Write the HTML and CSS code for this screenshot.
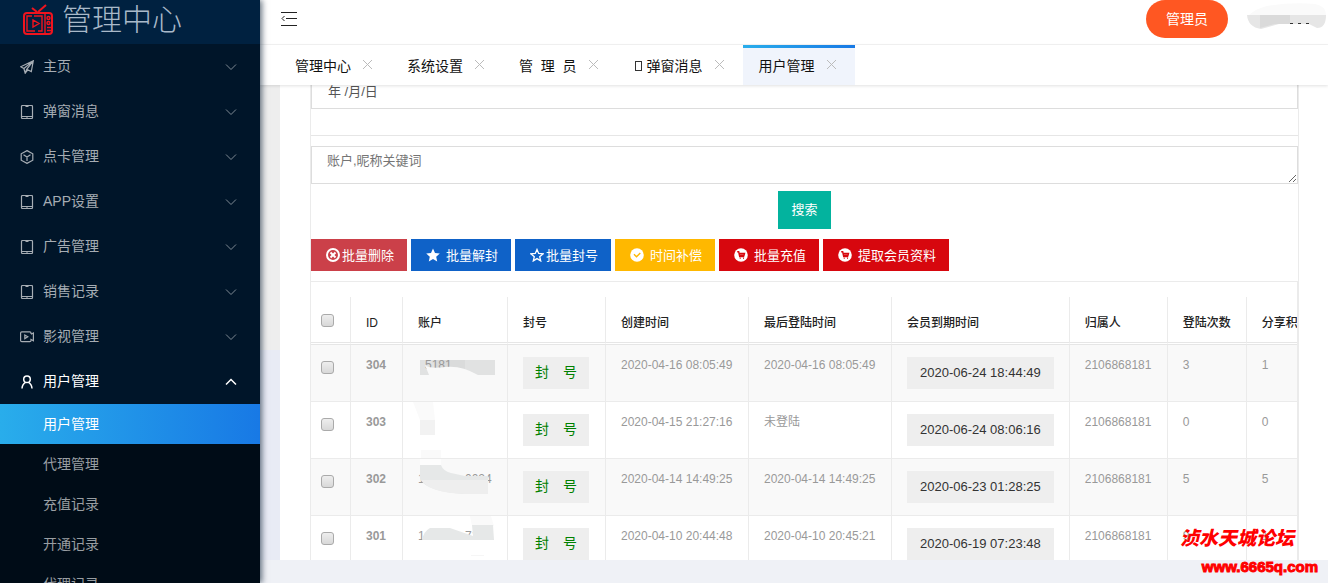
FILE: index.html
```html
<!DOCTYPE html>
<html lang="zh-CN">

<head>
    <meta charset="UTF-8">
    <meta name="viewport" content="width=device-width, initial-scale=1.0">
    <title>管理中心</title>
    <link rel="stylesheet" href="styles.css">
</head>

<body>
    <!-- shared icons -->
    <svg class="sprite" aria-hidden="true">
        <symbol id="i-down" viewBox="0 0 12 12"><path d="M1 3.5l5 5 5-5" /></symbol>
        <symbol id="i-up" viewBox="0 0 12 12"><path d="M1 8.5l5-5 5 5" /></symbol>
        <symbol id="i-close" viewBox="0 0 11 11"><path d="M1 1l9 9M10 1l-9 9" /></symbol>
        <symbol id="i-plane" viewBox="0 0 14 14"><path d="M13.3.8L.7 6.800l3.200 1.700L13.300.8l-2 10.700-4.600-2.200M3.900 8.500l1.300 4.700 1.500-3.900L13.300.8M5.200 13.200l2.600-3.300" /></symbol>
        <symbol id="i-phone" viewBox="0 0 14 14"><rect x="1.500" y=".5" width="11" height="13" rx="1" /><path d="M1.500 11.500h11M5.500 1.500h3M6.500 12.500h1" /></symbol>
        <symbol id="i-cube" viewBox="0 0 14 14"><path d="M7 .6l5.800 3.200v6.400L7 13.400l-5.800-3.200V3.800zM3.500 4.800L7 7l3.500-2.200M7 7v4" /></symbol>
        <symbol id="i-video" viewBox="0 0 14 14"><path d="M11 4V3q0-1.200-1.200-1.200h-8Q.6 1.800.6 3v7.500q0 1.200 1.200 1.200h8Q11 11.700 11 10.500V9.500l2.400 1.200V3L11 4.200M4.800 5v3.600l3-1.800z" /></symbol>
        <symbol id="i-user" viewBox="0 0 14 14"><circle cx="7" cy="4.300" r="3.300" /><path d="M5.500 7.300C3.300 8.500 2.200 10.500 2 13.500M8.500 7.300c2.200 1.200 3.300 3.200 3.500 6.200" /></symbol>
        <symbol id="i-cart" viewBox="0 0 14 14"><circle class="solid" cx="7" cy="7" r="6.800" /><path class="cut" d="M3.200 3.800h1.500l1 4.700h4.600M5 5.500h5.500l-.5 1.800H5.500" /><path class="cut" d="M5.800 10.300h.8M9 10.300h.8" /></symbol>
    </svg>

    <aside class="sidebar">
        <div class="logo">
            <svg class="logo-icon" viewBox="0 0 32 32">
                <rect x="2" y="9" width="28" height="21" rx="3" />
                <path d="M15 8l-5-4M16 8l8-7" />
                <path class="line" d="M23 9v21M12 12h8v15h-4M13 27H5V12h5M11 16v7l6-3.500z" />
                <circle class="line" cx="26.500" cy="14" r="1.500" />
                <circle class="line" cx="26.500" cy="19" r="1.500" />
                <path class="line" d="M25 23.500h4M25 26.500h4" />
            </svg>
            <span>管理中心</span>
        </div>
        <nav class="menu">
            <a href="#"><svg><use href="#i-plane" /></svg><span>主页</span><svg class="arrow"><use href="#i-down" /></svg></a>
            <a href="#"><svg><use href="#i-phone" /></svg><span>弹窗消息</span><svg class="arrow"><use href="#i-down" /></svg></a>
            <a href="#"><svg><use href="#i-cube" /></svg><span>点卡管理</span><svg class="arrow"><use href="#i-down" /></svg></a>
            <a href="#"><svg><use href="#i-phone" /></svg><span>APP设置</span><svg class="arrow"><use href="#i-down" /></svg></a>
            <a href="#"><svg><use href="#i-phone" /></svg><span>广告管理</span><svg class="arrow"><use href="#i-down" /></svg></a>
            <a href="#"><svg><use href="#i-phone" /></svg><span>销售记录</span><svg class="arrow"><use href="#i-down" /></svg></a>
            <a href="#"><svg><use href="#i-video" /></svg><span>影视管理</span><svg class="arrow"><use href="#i-down" /></svg></a>
            <a href="#" class="open"><svg><use href="#i-user" /></svg><span>用户管理</span><svg class="arrow"><use href="#i-up" /></svg></a>
            <div class="submenu">
                <a href="#" class="current">用户管理</a>
                <a href="#">代理管理</a>
                <a href="#">充值记录</a>
                <a href="#">开通记录</a>
                <a href="#">代理记录</a>
            </div>
        </nav>
    </aside>

    <main class="main">
        <header class="topbar">
            <button type="button" class="fold" aria-label="收起菜单">
                <svg viewBox="0 0 16 14"><path d="M0 .5h16M5 6.500h11M0 13.500h16M3.500 4L1 6.500 3.500 9" /></svg>
            </button>
            <div class="account">
                <button type="button" class="role">管理员</button>
                <svg class="name-mask" viewBox="0 0 80 26">
                    <path fill="#fafafa" d="M2 12Q8 6 20 3Q45-1 68 1Q80 3 79 14H2z" />
                    <path fill="#e6e6e6" d="M0 12h79q0 13-9 13l-8-4H32L14 26Q1 24 0 12z" />
                    <path fill="#dadada" d="M13 12h30v9H28l-15 4z" />
                    <path stroke="#333" stroke-dasharray="3 5" d="M43 20.500h19" />
                </svg>
            </div>
        </header>

        <nav class="tabs">
            <a href="#">管理中心<svg><use href="#i-close" /></svg></a>
            <a href="#">系统设置<svg><use href="#i-close" /></svg></a>
            <a href="#">管&nbsp; 理&nbsp; 员<svg><use href="#i-close" /></svg></a>
            <a href="#"><span><i class="missing"></i>弹窗消息</span><svg><use href="#i-close" /></svg></a>
            <a href="#" class="current">用户管理<svg><use href="#i-close" /></svg></a>
        </nav>

        <section class="content">
            <div class="panel">
                <form class="search">
                    <div class="date-row">
                        <input type="text" placeholder="年 /月/日" aria-label="日期">
                    </div>
                    <textarea placeholder="账户,昵称关键词" aria-label="关键词"></textarea>
                    <button type="submit">搜索</button>
                </form>

                <div class="actions">
                    <button type="button" class="btn-delete"><svg viewBox="0 0 14 14"><circle cx="7" cy="7" r="6" /><path d="M4.500 4.500l5 5M9.500 4.500l-5 5" /></svg>批量删除</button>
                    <button type="button" class="btn-blue spaced"><svg viewBox="0 0 14 14"><path class="solid" d="M7 .5l2 4.500 4.800.5-3.600 3.200 1 4.800L7 11l-4.200 2.500 1-4.800L.2 5.500 5 5z" /></svg>批量解封</button>
                    <button type="button" class="btn-blue"><svg viewBox="0 0 14 14"><path class="thin" d="M7 1.500l1.700 4 4.300.4-3.300 2.800 1 4.200L7 10.600l-3.700 2.300 1-4.200L1 5.900l4.300-.4z" /></svg>批量封号</button>
                    <button type="button" class="btn-yellow spaced"><svg viewBox="0 0 14 14"><circle class="solid" cx="7" cy="7" r="6.800" /><path class="cut" d="M4 6.300l2.500 2.500L10.300 5" /></svg>时间补偿</button>
                    <button type="button" class="btn-red spaced"><svg><use href="#i-cart" /></svg>批量充值</button>
                    <button type="button" class="btn-red spaced"><svg><use href="#i-cart" /></svg>提取会员资料</button>
                </div>

                <div class="table-wrap">
                    <table>
                        <thead>
                            <tr>
                                <th class="check"><input type="checkbox" aria-label="全选"></th>
                                <th class="id">ID</th>
                                <th>账户</th>
                                <th class="short">封号</th>
                                <th class="time">创建时间</th>
                                <th class="time">最后登陆时间</th>
                                <th>会员到期时间</th>
                                <th class="short">归属人</th>
                                <th>登陆次数</th>
                                <th>分享积分</th>
                            </tr>
                        </thead>
                        <tbody>
                            <tr>
                                <td class="check"><input type="checkbox" aria-label="304"></td>
                                <td class="id">304</td>
                                <td class="user">
                                    <svg viewBox="0 0 104 56">
                                        <path fill="#e1e2e2" d="M17 15h75v15H17z" />
                                        <path fill="#dadbdb" d="M32 15h30v15H32z" />
                                        <text x="22" y="24">5181</text>
                                        <path fill="#f9f9f9" d="M22 20q4 4 20 2t33 8H26z" />
                                    </svg>
                                </td>
                                <td><button type="button" class="ban">封&emsp;号</button></td>
                                <td>2020-04-16 08:05:49</td>
                                <td>2020-04-16 08:05:49</td>
                                <td><button type="button" class="expire">2020-06-24 18:44:49</button></td>
                                <td>2106868181</td>
                                <td>3</td>
                                <td>1</td>
                            </tr>
                            <tr>
                                <td class="check"><input type="checkbox" aria-label="303"></td>
                                <td class="id">303</td>
                                <td class="user">
                                    <svg viewBox="0 0 104 56">
                                        <path fill="#fafafa" d="M10 0h20l2 18H17z" />
                                        <path fill="#f2f2f2" d="M17 18h15v15H17z" />
                                        <path fill="#fafafa" d="M18 48h20v8H18z" />
                                    </svg>
                                </td>
                                <td><button type="button" class="ban">封&emsp;号</button></td>
                                <td>2020-04-15 21:27:16</td>
                                <td>未登陆</td>
                                <td><button type="button" class="expire">2020-06-24 08:06:16</button></td>
                                <td>2106868181</td>
                                <td>0</td>
                                <td>0</td>
                            </tr>
                            <tr>
                                <td class="check"><input type="checkbox" aria-label="302"></td>
                                <td class="id">302</td>
                                <td class="user">
                                    <svg viewBox="0 0 104 56">
                                        <text x="15" y="24">1</text>
                                        <text x="62" y="24">0024</text>
                                        <path fill="#fdfdfd" d="M17 0h21v6H17z" />
                                        <path fill="#e6e8e8" d="M17 6h21q2 6 10 8l14 3H85v18H62Q24 33 17 20z" />
                                        <path fill="#eee" d="M18 21h67v14H62Q27 34 18 21z" />
                                    </svg>
                                </td>
                                <td><button type="button" class="ban">封&emsp;号</button></td>
                                <td>2020-04-14 14:49:25</td>
                                <td>2020-04-14 14:49:25</td>
                                <td><button type="button" class="expire">2020-06-23 01:28:25</button></td>
                                <td>2106868181</td>
                                <td>5</td>
                                <td>5</td>
                            </tr>
                            <tr>
                                <td class="check"><input type="checkbox" aria-label="301"></td>
                                <td class="id">301</td>
                                <td class="user">
                                    <svg viewBox="0 0 104 56">
                                        <text x="15" y="24">1</text>
                                        <text x="62" y="24">71</text>
                                        <path fill="#fafafa" d="M67 0h21l3 10H69z" />
                                        <path fill="#e6e8e8" d="M69 9h21l1 15H19q2-9 8-12h20l23 8z" />
                                        <path fill="#f6f6f6" d="M68 39h13v1H68z" />
                                    </svg>
                                </td>
                                <td><button type="button" class="ban">封&emsp;号</button></td>
                                <td>2020-04-10 20:44:48</td>
                                <td>2020-04-10 20:45:21</td>
                                <td><button type="button" class="expire">2020-06-19 07:23:48</button></td>
                                <td>2106868181</td>
                                <td>9</td>
                                <td>1</td>
                            </tr>
                        </tbody>
                    </table>
                </div>
            </div>
        </section>
    </main>

    <div class="watermark">
        <span class="forum">浈水天城论坛</span>
        <span class="site">www.6665q.com</span>
    </div>
</body>

</html>
```
FILE: styles.css
```css
* {
    box-sizing: border-box;
}

body {
    display: flex;
    height: 100vh;
    margin: 0;
    overflow: hidden;
    background: #eff1f6;
    font-family: "Liberation Sans", "Noto Sans CJK SC", sans-serif;
    font-size: 14px;
}

a {
    color: inherit;
    text-decoration: none;
}

button,
input,
textarea {
    font-family: inherit;
}

button {
    padding: 0;
    border: none;
    cursor: pointer;
}

svg {
    flex: none;
    fill: none;
    stroke: currentColor;
}

.sprite {
    display: none;
}

.solid {
    fill: #fff;
    stroke: none;
}

/* sidebar */
.sidebar {
    position: relative;
    z-index: 2;
    flex: 0 0 260px;
    overflow: hidden;
    background: #001529;
    color: #a6adb4;
    box-shadow: 2px 0 6px rgba(0, 21, 41, 0.6);
}

.logo {
    display: flex;
    align-items: center;
    gap: 8px;
    height: 44px;
    padding: 0 22px 4px;
    background: #002140;
    color: #a9b9c9;
    font-size: 30px;
    font-weight: 300;
    line-height: 40px;
}

.logo-icon {
    width: 32px;
    height: 32px;
    color: #f0141e;
    stroke-width: 2;
}

.logo-icon .line {
    stroke-width: 1.4;
}

.menu a {
    display: flex;
    align-items: center;
    height: 45px;
    padding: 0 23px 0 20px;
}

.menu span {
    padding-bottom: 3px;
}

.menu svg {
    width: 14px;
    height: 14px;
    margin-right: 9px;
    stroke-width: 1.2;
}

.menu .arrow {
    width: 12px;
    height: 12px;
    margin: 0 0 0 auto;
    color: #7f8a94;
    stroke-width: 1;
}

.menu .open,
.menu .open .arrow,
.menu .submenu .current {
    color: #fff;
}

.menu .open svg {
    stroke-width: 1.5;
}

.submenu {
    background: #000c17;
}

.menu .submenu a {
    height: 40px;
    padding: 0 0 2px 43px;
    color: #999ea2;
}

.menu .submenu .current {
    background: linear-gradient(to right, #29adeb, #1879e5);
}

/* top */
.main {
    display: flex;
    flex: 1;
    flex-direction: column;
    min-width: 0;
    padding-bottom: 23px;
}

.topbar {
    display: flex;
    justify-content: space-between;
    flex: 0 0 45px;
    background: #fff;
    border-bottom: 1px solid #f4f4f4;
}

.fold {
    width: 58px;
    height: 38px;
    background: none;
    color: #222;
}

.fold svg {
    display: block;
    width: 16px;
    height: 14px;
    margin: 0 auto;
}

.account {
    display: flex;
    gap: 19px;
}

.role {
    height: 38px;
    padding: 0 20px 2px;
    border-radius: 19px;
    background: #ff5722;
    color: #fff;
    font-size: 14px;
}

.name-mask {
    width: 80px;
    height: 26px;
    margin: 3px 1px 0 0;
    stroke: none;
}

.tabs {
    position: relative;
    z-index: 1;
    display: flex;
    flex: 0 0 40px;
    padding-left: 19px;
    background: #fff;
    color: #111;
    box-shadow: 0 1px 3px rgba(0, 0, 0, 0.12);
}

.tabs a {
    display: flex;
    align-items: center;
    gap: 11px;
    padding: 0 18px 1px 16px;
    white-space: nowrap;
}

.tabs svg {
    width: 11px;
    height: 11px;
    color: #bbb;
}

.tabs .current {
    background: linear-gradient(to right, #29adeb, #1879e5) top / 100% 3px no-repeat #f0f4fc;
}

.missing {
    display: inline-block;
    width: 7px;
    height: 10px;
    margin: 0 5px 0 2px;
    border: 1px solid #333;
}

/* content */
.content {
    flex: 1;
    min-height: 0;
    overflow: hidden;
    padding: 0 29px 0 50px;
    background: linear-gradient(#eee 265px, #e8ebf5 265px) left / 20px 100% no-repeat #fff;
}

.panel {
    min-height: 100%;
    border: solid #ebebeb;
    border-width: 0 1px;
}

.search {
    display: flex;
    flex-direction: column;
    align-items: center;
}

.date-row {
    width: 100%;
    padding-bottom: 26px;
    border-bottom: 1px solid #e6e6e6;
}

.search input,
.search textarea {
    display: block;
    width: 100%;
    border: 1px solid #ddd;
    border-radius: 0;
    background: #fff;
    font-size: 13px;
}

.search input {
    height: 24px;
    padding: 0 16px 10px;
    border-top: none;
}

.search textarea {
    height: 38px;
    margin: 10px 0 7px;
    padding: 5px 15px;
    line-height: 18px;
    resize: vertical;
}

.search ::placeholder {
    color: #757575;
}

.search input::placeholder {
    color: #555;
}

.search button {
    height: 38px;
    padding: 0 13px 4px;
    background: #03b39e;
    color: #fff;
    font-size: 13px;
}

.actions {
    display: flex;
    gap: 4px;
    padding: 10px 0;
    border-bottom: 1px solid #ebebeb;
}

.actions button {
    display: flex;
    align-items: center;
    height: 32px;
    padding: 0 13px 2px 15px;
    color: #fff;
    font-size: 13px;
    white-space: nowrap;
}

.actions svg {
    width: 14px;
    height: 14px;
    margin: 2px 2px 0 0;
    stroke-width: 2;
}

.actions .spaced svg {
    margin-right: 6px;
}

.actions .thin {
    stroke-width: 1.3;
}

.btn-delete {
    background: #cb4049;
}

.btn-blue {
    background: #0f62c8;
}

.btn-yellow {
    background: #ffb800;
    --cut: #ffb800;
}

.btn-red {
    background: #d7070e;
    --cut: #d7070e;
}

.cut {
    stroke: var(--cut);
    stroke-width: 1.4;
}

/* user list */
.table-wrap {
    overflow: hidden;
    padding-top: 15px;
    border-right: 1px solid #ebebeb;
}

table {
    border-collapse: separate;
    border-spacing: 0;
    font-size: 12px;
    line-height: 16px;
    white-space: nowrap;
}

th,
td {
    border-right: 1px solid #ebebeb;
    text-align: left;
    vertical-align: top;
}

th {
    padding: 18px 15px 11px;
    border-bottom: 3px double #e6e6e6;
    color: #222;
    font-weight: 500;
}

.short {
    min-width: 98px;
}

.time {
    min-width: 143px;
}

td {
    height: 57px;
    padding: 12px 15px;
    border-bottom: 1px solid #ebebeb;
    color: #999;
}

tbody tr:nth-child(odd) {
    background: #f9f9f9;
}

.check {
    padding-right: 16px;
    padding-left: 10px;
}

.check input {
    display: block;
    width: 13px;
    height: 13px;
    margin: 4px 0 0;
    border: 1px solid #aaa;
    border-radius: 3px;
    appearance: none;
    background: linear-gradient(#eee, #d8d8d8);
}

th.check input {
    margin-top: -1px;
}

.id {
    min-width: 52px;
}

td.id {
    font-weight: bold;
}

td.user {
    padding: 0;
}

.user svg {
    display: block;
    width: 104px;
    height: 56px;
    stroke: none;
}

.user text {
    fill: #999;
}

td button {
    display: block;
    height: 32px;
    padding: 0 13px 2px;
    background: #eee;
    color: #333;
    font-size: 13px;
}

td .ban {
    padding: 0 12px 4px;
    color: green;
    font-size: 14px;
}

/* forum stamp */
.watermark {
    position: absolute;
    right: 10px;
    bottom: 4px;
    z-index: 3;
    color: #f00;
    font-weight: bold;
    text-align: right;
}

.forum {
    display: block;
    padding-right: 24px;
    font-size: 19px;
    font-style: italic;
    font-weight: 900;
    line-height: 32px;
}

.site {
    display: block;
    font-size: 15px;
    line-height: 24px;
    -webkit-text-stroke: 1px #f00;
}
```
